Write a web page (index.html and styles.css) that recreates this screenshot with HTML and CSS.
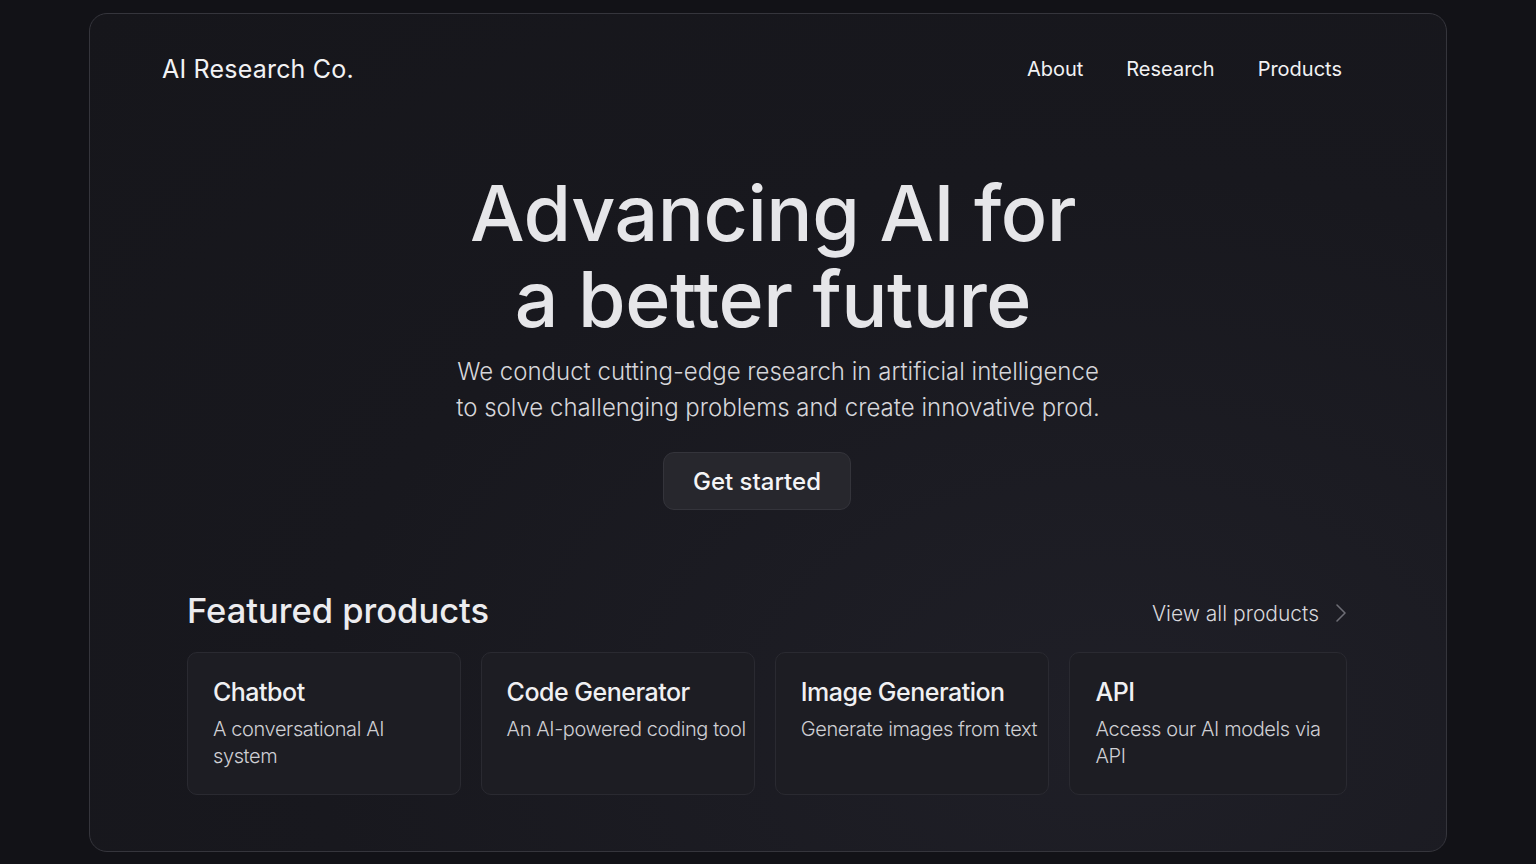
FILE: index.html
```html
<!DOCTYPE html>
<html lang="en">
<head>
    <meta charset="UTF-8">
    <meta name="viewport" content="width=device-width, initial-scale=1.0">
    <title>AI Research Co.</title>
    <link rel="stylesheet" href="styles.css">
</head>
<body>
    <div class="frame">
        <header class="header">
            <div class="logo">AI Research Co.</div>
            <nav class="nav">
                <a href="#">About</a>
                <a href="#">Research</a>
                <a href="#">Products</a>
            </nav>
        </header>

        <section class="hero">
            <h1 class="hero-title">Advancing AI for<br>a better future</h1>
            <p class="hero-text">We conduct cutting-edge research in artificial intelligence<br>to solve challenging problems and create innovative prod.</p>
            <button class="cta">Get started</button>
        </section>

        <!-- Featured products -->
        <section class="products">
            <div class="products-head">
                <h2 class="products-title">Featured products</h2>
                <a href="#" class="view-all">View all products
                    <svg width="12" height="20" viewBox="0 0 12 20" fill="none" stroke="#6e6e76" stroke-width="1.6" stroke-linecap="round" stroke-linejoin="round"><path d="M2 2l8 8-8 8"/></svg>
                </a>
            </div>
            <div class="cards">
                <div class="card">
                    <div class="card-title">Chatbot</div>
                    <div class="card-text">A conversational AI<br>system</div>
                </div>
                <div class="card">
                    <div class="card-title">Code Generator</div>
                    <div class="card-text">An AI-powered coding tool</div>
                </div>
                <div class="card">
                    <div class="card-title">Image Generation</div>
                    <div class="card-text">Generate images from text</div>
                </div>
                <div class="card">
                    <div class="card-title">API</div>
                    <div class="card-text">Access our AI models via<br>API</div>
                </div>
            </div>
        </section>
    </div>
</body>
</html>
```

FILE: styles.css
```css
body {
    background-color: #121217;
    color: #ececef;
    font-family: Inter, "Noto Sans", sans-serif;
    margin: 0;
    padding: 13px 89px;
    overflow: hidden;
}
.frame {
    height: 839px;
    border: 1px solid #35353c;
    border-radius: 18px;
    background: radial-gradient(ellipse at 75% 85%, #1f1f27 0%, #18181e 55%, #16161b 100%);
    box-sizing: border-box;
}
.header {
    height: 110px;
    display: flex;
    align-items: center;
    justify-content: space-between;
    padding: 0 104px 0 72px;
}
.logo {
    font-size: 25px;
    letter-spacing: 0.2px;
    color: #f2f2f4;
}
.nav {
    display: flex;
    gap: 43px;
}
.nav a {
    color: #f2f2f4;
    text-decoration: none;
    font-size: 20px;
}

/* Hero */
.hero {
    display: flex;
    flex-direction: column;
    align-items: center;
    text-align: center;
    margin-top: 46px;
}
.hero-title {
    font-size: 77px;
    line-height: 86px;
    font-weight: 500;
    letter-spacing: -0.5px;
    color: #e6e6e9;
    margin: 0 0 0 10px;
}
.hero-text {
    font-size: 24px;
    line-height: 36px;
    font-weight: 300;
    color: #d6d6da;
    margin: 12px 0 0 20px;
}
.cta {
    margin: 26px 22px 0 0;
    width: 188px;
    height: 58px;
    background-color: #27272d;
    border: 1px solid #34343b;
    border-radius: 11px;
    color: #f4f4f6;
    font-family: inherit;
    font-size: 24px;
    font-weight: 500;
}

/* Products */
.products {
    margin: 81px 99px 0 97px;
}
.products-head {
    display: flex;
    justify-content: space-between;
    align-items: center;
}
.products-title {
    font-size: 34.5px;
    line-height: 40px;
    font-weight: 500;
    color: #ececef;
    margin: 0;
}
.view-all {
    color: #d8d8dc;
    text-decoration: none;
    font-size: 21px;
    font-weight: 300;
    display: flex;
    align-items: center;
    gap: 16px;
    margin-top: 4px;
}
.cards {
    display: grid;
    grid-template-columns: 276fr 267fr 277fr 280fr;
    gap: 20px;
    margin-top: 21px;
}
.card {
    height: 143px;
    box-sizing: border-box;
    padding: 23px 8px 0 25px;
    background-color: #1d1d23;
    border: 1px solid #2a2a31;
    border-radius: 10px;
}
.card-title {
    font-size: 25px;
    line-height: 32px;
    font-weight: 500;
    letter-spacing: -0.5px;
    color: #f0f0f2;
}
.card-text {
    margin-top: 8px;
    font-size: 20px;
    line-height: 27px;
    font-weight: 300;
    letter-spacing: -0.4px;
    white-space: nowrap;
    color: #cfcfd4;
}
```
